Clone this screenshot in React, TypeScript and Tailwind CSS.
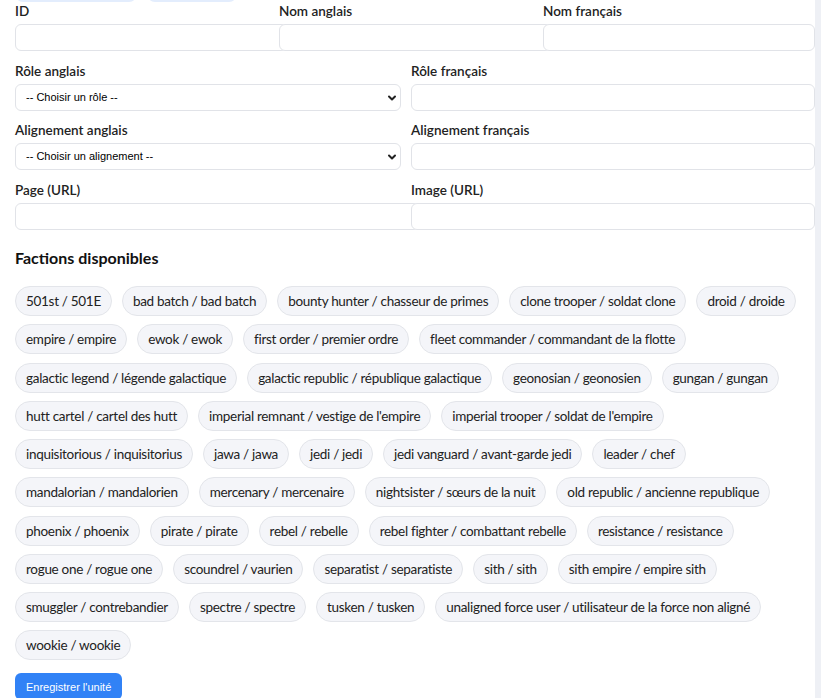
import { ChevronDown } from "lucide-react";

const ROLES = ["-- Choisir un rôle --"];
const ALIGNMENTS = ["-- Choisir un alignement --"];

const FACTION_ROWS: string[][] = [
  ["501st / 501E", "bad batch / bad batch", "bounty hunter / chasseur de primes", "clone trooper / soldat clone", "droid / droide"],
  ["empire / empire", "ewok / ewok", "first order / premier ordre", "fleet commander / commandant de la flotte"],
  ["galactic legend / légende galactique", "galactic republic / république galactique", "geonosian / geonosien", "gungan / gungan"],
  ["hutt cartel / cartel des hutt", "imperial remnant / vestige de l'empire", "imperial trooper / soldat de l'empire"],
  ["inquisitorious / inquisitorius", "jawa / jawa", "jedi / jedi", "jedi vanguard / avant-garde jedi", "leader / chef"],
  ["mandalorian / mandalorien", "mercenary / mercenaire", "nightsister / sœurs de la nuit", "old republic / ancienne republique"],
  ["phoenix / phoenix", "pirate / pirate", "rebel / rebelle", "rebel fighter / combattant rebelle", "resistance / resistance"],
  ["rogue one / rogue one", "scoundrel / vaurien", "separatist / separatiste", "sith / sith", "sith empire / empire sith"],
  ["smuggler / contrebandier", "spectre / spectre", "tusken / tusken", "unaligned force user / utilisateur de la force non aligné"],
  ["wookie / wookie"],
];

function Label({ children }: { children: React.ReactNode }) {
  return <label className="block text-[13.5px] leading-[18px] font-semibold text-[#222] mb-[4px]">{children}</label>;
}

function TextInput() {
  return (
    <input
      type="text"
      className="box-content block w-full h-[17px] px-2 py-[4px] bg-white border border-[#e1e3e8] rounded-[6px] outline-none"
    />
  );
}

function Select({ options }: { options: string[] }) {
  return (
    <div className="relative">
      <select className="appearance-none block w-full h-[27px] pl-[10px] pr-6 bg-white border border-[#e1e3e8] rounded-[6px] text-[11px] text-black outline-none [font-family:'Liberation_Sans',Arial,sans-serif]">
        {options.map((o) => (
          <option key={o}>{o}</option>
        ))}
      </select>
      <ChevronDown size={12} strokeWidth={4} className="absolute right-[3px] top-[8px] text-[#222] pointer-events-none" />
    </div>
  );
}

export default function App() {
  return (
    <div className="min-h-screen bg-[#eef0f5] [font-family:Lato,sans-serif]">
      <div className="w-[815px] bg-white overflow-hidden">
        <div className="w-[782px] ml-[15px]">
          {/* top buttons, scrolled mostly out of view */}
          <div className="flex gap-[10px] -mt-[28px]">
            <div className="w-[122px] h-[30px] rounded-[8px] bg-[#e3edfd]" />
            <div className="w-[90px] h-[30px] rounded-[8px] bg-[#e3edfd]" />
          </div>

          <div className="grid grid-cols-3 gap-x-[10px] mb-[11px]">
            <div>
              <Label>ID</Label>
              <TextInput />
            </div>
            <div>
              <Label>Nom anglais</Label>
              <TextInput />
            </div>
            <div>
              <Label>Nom français</Label>
              <TextInput />
            </div>
          </div>

          <div className="grid grid-cols-2 gap-x-[10px] mb-[10px]">
            <div>
              <Label>Rôle anglais</Label>
              <Select options={ROLES} />
            </div>
            <div>
              <Label>Rôle français</Label>
              <TextInput />
            </div>
          </div>

          <div className="grid grid-cols-2 gap-x-[10px] mb-[11px]">
            <div>
              <Label>Alignement anglais</Label>
              <Select options={ALIGNMENTS} />
            </div>
            <div>
              <Label>Alignement français</Label>
              <TextInput />
            </div>
          </div>

          <div className="grid grid-cols-2 gap-x-[10px]">
            <div>
              <Label>Page (URL)</Label>
              <TextInput />
            </div>
            <div>
              <Label>Image (URL)</Label>
              <TextInput />
            </div>
          </div>

          {/* Factions */}
          <h2 className="mt-[17px] mb-[17px] text-[16px] leading-[22px] font-bold text-[#111]">Factions disponibles</h2>
          <div className="flex flex-col gap-[8.25px]">
            {FACTION_ROWS.map((row, i) => (
              <div key={i} className="flex gap-[10px]">
                {row.map((f) => (
                  <span
                    key={f}
                    className="whitespace-nowrap px-[10px] py-[4px] text-[13.5px] tracking-[-0.3px] leading-[20px] text-[#222] bg-[#f4f5f9] border border-[#e3e5ea] rounded-full"
                  >
                    {f}
                  </span>
                ))}
              </div>
            ))}
          </div>

          <button className="mt-[13px] px-[11px] h-[27px] rounded-[6px] bg-[#3182f6] text-white text-[11px] [font-family:'Liberation_Sans',Arial,sans-serif]">
            Enregistrer l'unité
          </button>
        </div>
      </div>
    </div>
  );
}
